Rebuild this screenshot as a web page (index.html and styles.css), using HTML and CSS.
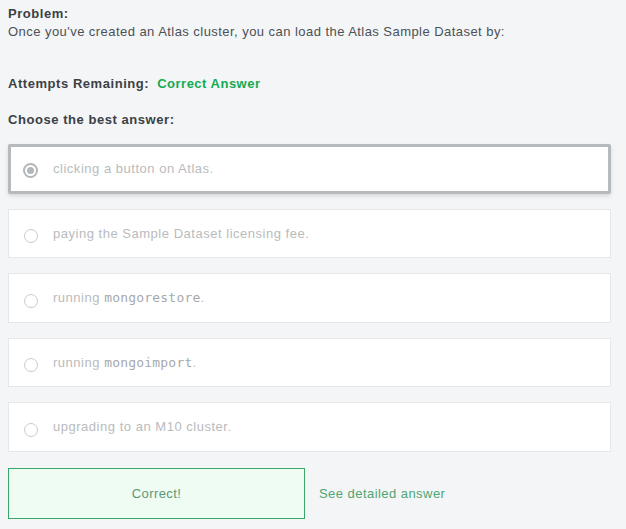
FILE: index.html
```html
<!DOCTYPE html>
<html>
<head>
<meta charset="utf-8">
<link rel="stylesheet" href="styles.css">
</head>
<body>
<div class="page">
  <div class="problem">
    <div class="label">Problem:</div>
    <div class="question">Once you've created an Atlas cluster, you can load the Atlas Sample Dataset by:</div>
  </div>
  <div class="attempts"><span class="label">Attempts Remaining:</span><span class="correct">Correct Answer</span></div>
  <div class="choose label">Choose the best answer:</div>
  <div class="options">
    <div class="option selected"><span class="radio checked"></span><span class="otext">clicking a button on Atlas.</span></div>
    <div class="option"><span class="radio"></span><span class="otext">paying the Sample Dataset licensing fee.</span></div>
    <div class="option"><span class="radio"></span><span class="otext">running <code>mongorestore</code>.</span></div>
    <div class="option"><span class="radio"></span><span class="otext">running <code>mongoimport</code>.</span></div>
    <div class="option"><span class="radio"></span><span class="otext">upgrading to an M10 cluster.</span></div>
  </div>
  <div class="actions">
    <div class="result">Correct!</div>
    <a class="detail">See detailed answer</a>
  </div>
</div>
</body>
</html>
```
FILE: styles.css
```css
html, body {
  margin: 0;
  padding: 0;
  background: #f4f5f6;
}
body {
  font-family: "Liberation Sans", Arial, sans-serif;
  font-size: 13px;
  color: #3d4f58;
}
.page {
  padding: 5px 15px 10px 8px;
}
.label {
  font-weight: bold;
  color: #3b4045;
  letter-spacing: 0.55px;
}
.problem .label {
  line-height: 17px;
}
.question {
  line-height: 20px;
  color: #4a5157;
  letter-spacing: 0.45px;
}
.attempts {
  margin-top: 33px;
  line-height: 17px;
}
.correct {
  font-weight: bold;
  color: #13aa52;
  letter-spacing: 0.5px;
  margin-left: 8px;
}
.choose {
  margin-top: 19px;
  line-height: 17px;
}
.options {
  margin-top: 16px;
  display: flex;
  flex-direction: column;
  gap: 15px;
}
.option {
  height: 49.5px;
  box-sizing: border-box;
  background: #fff;
  border: 1px solid #e5e8ea;
  display: flex;
  align-items: center;
  padding-left: 15px;
}
.option.selected {
  border: 3px solid #b5babe;
  border-radius: 2px;
  padding-left: 12px;
  box-shadow: 0 2px 4px rgba(0,0,0,0.12);
}
.radio {
  width: 14px;
  height: 14px;
  border: 1px solid #c8cbcd;
  border-radius: 50%;
  box-sizing: border-box;
  margin-top: 6px;
  flex: none;
  display: flex;
  align-items: center;
  justify-content: center;
}
.radio.checked {
  width: 15px;
  height: 15px;
  border: 2px solid #b3b7ba;
  margin-top: 3px;
}
.radio.checked::after {
  content: "";
  width: 7px;
  height: 7px;
  border-radius: 50%;
  background: #b3b7ba;
}
.otext {
  margin-left: 15px;
  color: #b9bbbd;
  letter-spacing: 0.52px;
}
code {
  font-family: "DejaVu Sans Mono", "Liberation Mono", monospace;
  font-size: 13px;
  color: #a5a9ac;
  letter-spacing: 0.2px;
}
.actions {
  margin-top: 16px;
  display: flex;
  align-items: center;
}
.result {
  width: 297px;
  height: 51px;
  box-sizing: border-box;
  background: #effcf3;
  border: 1px solid #3aa66a;
  color: #5a9874;
  display: flex;
  align-items: center;
  justify-content: center;
  letter-spacing: 0.4px;
}
.detail {
  margin-left: 14px;
  color: #4fa574;
  letter-spacing: 0.45px;
}
```
